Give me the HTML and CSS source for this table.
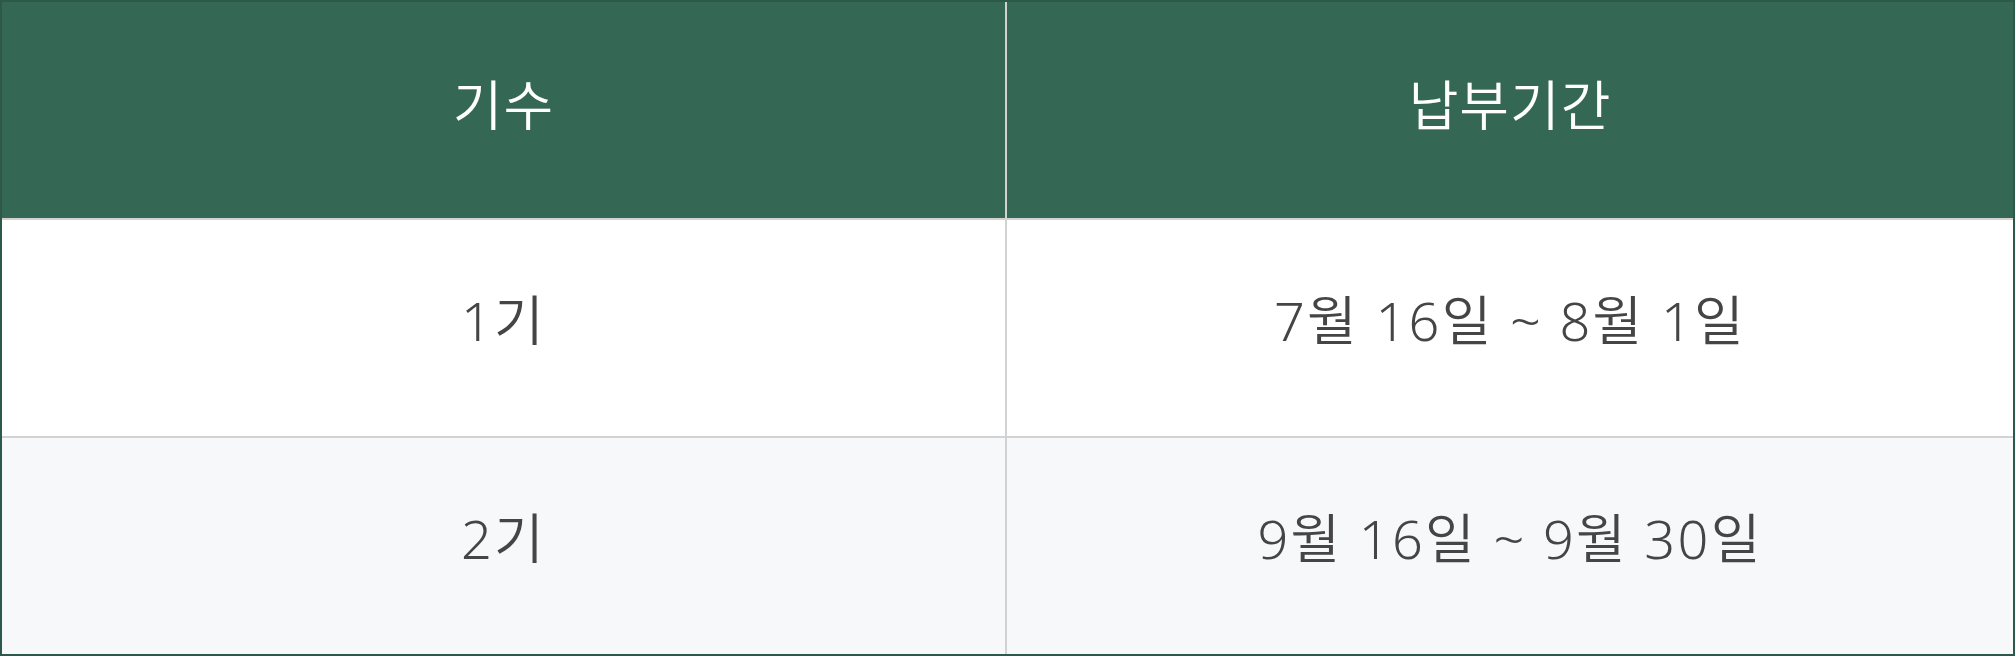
FILE: index.html
```html
<!DOCTYPE html>
<html lang="ko">
<head>
<meta charset="utf-8">
<link rel="stylesheet" href="styles.css">
</head>
<body>
<div class="table">
  <div class="cell head">기수</div>
  <div class="cell head">납부기간</div>
  <div class="cell">1기</div>
  <div class="cell">7월 16일 ~ 8월 1일</div>
  <div class="cell alt">2기</div>
  <div class="cell alt">9월 16일 ~ 9월 30일</div>
</div>
</body>
</html>
```
FILE: styles.css
```css
html, body {
  margin: 0;
  padding: 0;
  background: #ffffff;
}
.table {
  box-sizing: border-box;
  width: 2015px;
  height: 656px;
  border: 2px solid #2d5a48;
  display: grid;
  grid-template-columns: 1003px 1006px;
  grid-template-rows: 216px 216px 216px;
  gap: 2px;
  background: #d2d2d2;
  font-family: "Noto Sans", "Noto Sans CJK KR", sans-serif;
}
.cell {
  display: flex;
  align-items: center;
  justify-content: center;
  background: #ffffff;
  color: #454545;
  font-size: 54px;
  font-weight: 350;
  letter-spacing: 2.3px;
  padding-bottom: 22px;
  box-sizing: border-box;
}
.cell.head {
  background: #356854;
  color: #ffffff;
  letter-spacing: 1px;
  padding-bottom: 16px;
}
.cell.alt {
  background: #f7f8fa;
}
```
